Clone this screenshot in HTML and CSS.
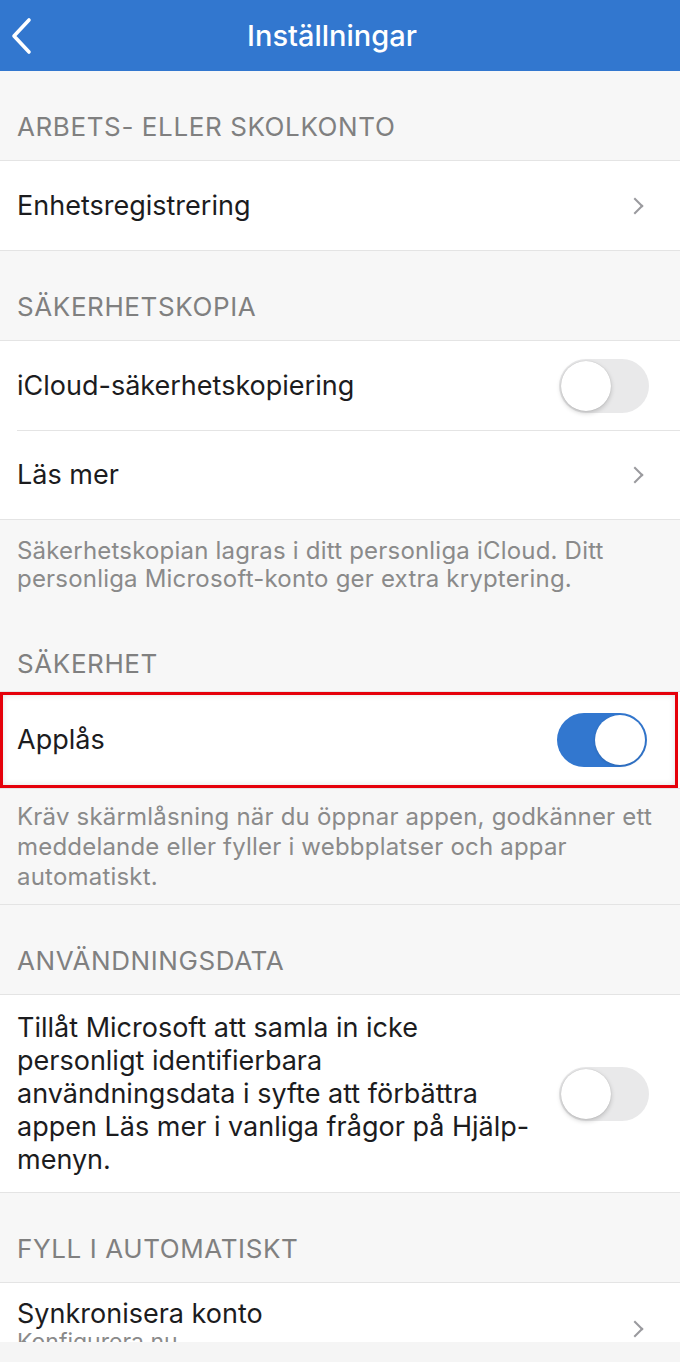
FILE: index.html
```html
<!DOCTYPE html>
<html lang="sv">
<head>
    <meta charset="UTF-8">
    <meta name="viewport" content="width=device-width, initial-scale=1.0">
    <title>Inställningar</title>
    <link rel="stylesheet" href="styles.css">
</head>
<body>
    <div class="screen">
        <header class="nav-bar">
            <button class="back-btn" title="Tillbaka">
                <svg width="24" height="38" viewBox="0 0 24 38">
                    <path d="M20 3 L5 19 L20 35" fill="none" stroke="#fff" stroke-width="3.6" stroke-linecap="round" stroke-linejoin="round"/>
                </svg>
            </button>
            <h1 class="nav-title">Inställningar</h1>
            <div class="nav-spacer"></div>
        </header>

        <main class="settings">
            <!-- Arbets- eller skolkonto -->
            <div class="group-title">ARBETS- ELLER SKOLKONTO</div>
            <div class="group">
                <div class="row">
                    <span class="row-label">Enhetsregistrering</span>
                    <span class="chevron"></span>
                </div>
            </div>

            <!-- Säkerhetskopia -->
            <div class="group-title">SÄKERHETSKOPIA</div>
            <div class="group">
                <div class="row">
                    <span class="row-label">iCloud-säkerhetskopiering</span>
                    <span class="switch"></span>
                </div>
                <div class="row">
                    <span class="row-label">Läs mer</span>
                    <span class="chevron"></span>
                </div>
            </div>
            <p class="group-note">Säkerhetskopian lagras i ditt personliga iCloud. Ditt personliga Microsoft-konto ger extra kryptering.</p>

            <!-- Säkerhet -->
            <div class="group-title after-note">SÄKERHET</div>
            <div class="group">
                <div class="row row-highlight">
                    <span class="row-label">Applås</span>
                    <span class="switch on"></span>
                </div>
            </div>
            <p class="group-note note-wide">Kräv skärmlåsning när du öppnar appen, godkänner ett meddelande eller fyller i webbplatser och appar automatiskt.</p>

            <!-- Användningsdata -->
            <div class="group-title">ANVÄNDNINGSDATA</div>
            <div class="group">
                <div class="row row-tall">
                    <span class="row-label multiline">Tillåt Microsoft att samla in icke<br>personligt identifierbara<br>användningsdata i syfte att förbättra<br>appen Läs mer i vanliga frågor på Hjälp-<br>menyn.</span>
                    <span class="switch"></span>
                </div>
            </div>

            <!-- Fyll i automatiskt -->
            <div class="group-title">FYLL I AUTOMATISKT</div>
            <div class="group">
                <div class="row row-sub">
                    <div class="row-text">
                        <span class="row-label">Synkronisera konto</span>
                        <span class="row-sublabel">Konfigurera nu</span>
                    </div>
                    <span class="chevron"></span>
                </div>
            </div>
        </main>

        <div class="bottom-bar"></div>
    </div>
</body>
</html>
```

FILE: styles.css
```css
* {
    margin: 0;
    padding: 0;
    box-sizing: border-box;
}

body {
    background-color: #f7f7f7;
    color: #1c1c1e;
    font-family: Inter, 'Noto Sans', sans-serif;
}

.screen {
    height: 1362px;
    display: flex;
    flex-direction: column;
    overflow: hidden;
}

/* Top navigation bar */
.nav-bar {
    height: 71px;
    flex: none;
    background-color: #3277cf;
    display: grid;
    grid-template-columns: 60px 1fr 76px;
    align-items: center;
}

.back-btn {
    background: none;
    border: none;
    height: 71px;
    display: flex;
    align-items: center;
    padding-left: 9px;
    cursor: pointer;
}

.nav-title {
    text-align: center;
    color: #fff;
    font-size: 29px;
    font-weight: 500;
}

/* Settings list */
.settings {
    flex: 1;
    overflow: hidden;
}

.group-title {
    padding: 40px 17px 17px;
    line-height: 32px;
    font-size: 26px;
    color: #808080;
    letter-spacing: 0.6px;
}

.group-title.after-note {
    padding-top: 43px;
    padding-bottom: 11px;
}

.group {
    background-color: #fff;
    border-top: 1px solid #e4e4e4;
    border-bottom: 1px solid #e4e4e4;
}

.row {
    height: 89px;
    display: flex;
    align-items: center;
    justify-content: space-between;
    padding: 0 31px 0 17px;
    position: relative;
}

.row + .row::before {
    content: "";
    position: absolute;
    top: 0;
    left: 17px;
    right: 0;
    border-top: 1px solid #e4e4e4;
}

.row-label {
    font-size: 27px;
    line-height: 30px;
    color: #1c1c1e;
}

.row-label.multiline {
    white-space: nowrap;
    line-height: 33px;
}

.row-tall {
    height: auto;
    padding-top: 16px;
    padding-bottom: 16px;
}

.row-sub {
    height: auto;
    align-items: flex-start;
    padding-top: 16px;
    padding-bottom: 10px;
}

.row-sub .chevron {
    margin-top: 24px;
}

.row-text {
    display: flex;
    flex-direction: column;
}

.row-sublabel {
    font-size: 23px;
    line-height: 26px;
    color: #8a8a8a;
}

/* Annotation frame around the app lock row */
.row-highlight {
    height: 96px;
    margin-right: 2px;
    outline: 3px solid #e5000a;
    outline-offset: -3px;
    box-shadow: inset 0 0 8px rgba(0,0,0,0.25);
}

.chevron {
    width: 12px;
    height: 12px;
    border-right: 2px solid #9a9a9e;
    border-top: 2px solid #9a9a9e;
    transform: rotate(45deg);
    margin-right: 8px;
}

/* iOS style switch */
.switch {
    flex: none;
    width: 90px;
    height: 54px;
    border-radius: 27px;
    background-color: #e9e9ea;
    position: relative;
}

.switch::after {
    content: "";
    position: absolute;
    top: 2px;
    left: 2px;
    width: 50px;
    height: 50px;
    border-radius: 50%;
    background-color: #fff;
    box-shadow: 0 2px 5px rgba(0,0,0,0.2), 0 0 1px rgba(0,0,0,0.2);
}

.switch.on {
    background-color: #3277cf;
}

.switch.on::after {
    left: 38px;
    box-shadow: 0 1px 3px rgba(0,0,0,0.15);
}

.group-note {
    padding: 17px 17px 12px;
    font-size: 24px;
    line-height: 28px;
    letter-spacing: 0.2px;
    color: #8a8a8a;
}

.group-note.note-wide {
    padding-top: 13px;
    line-height: 30px;
    border-bottom: 1px solid #e4e4e4;
}

.bottom-bar {
    height: 20px;
    flex: none;
    background-color: #f5f5f5;
}
```
